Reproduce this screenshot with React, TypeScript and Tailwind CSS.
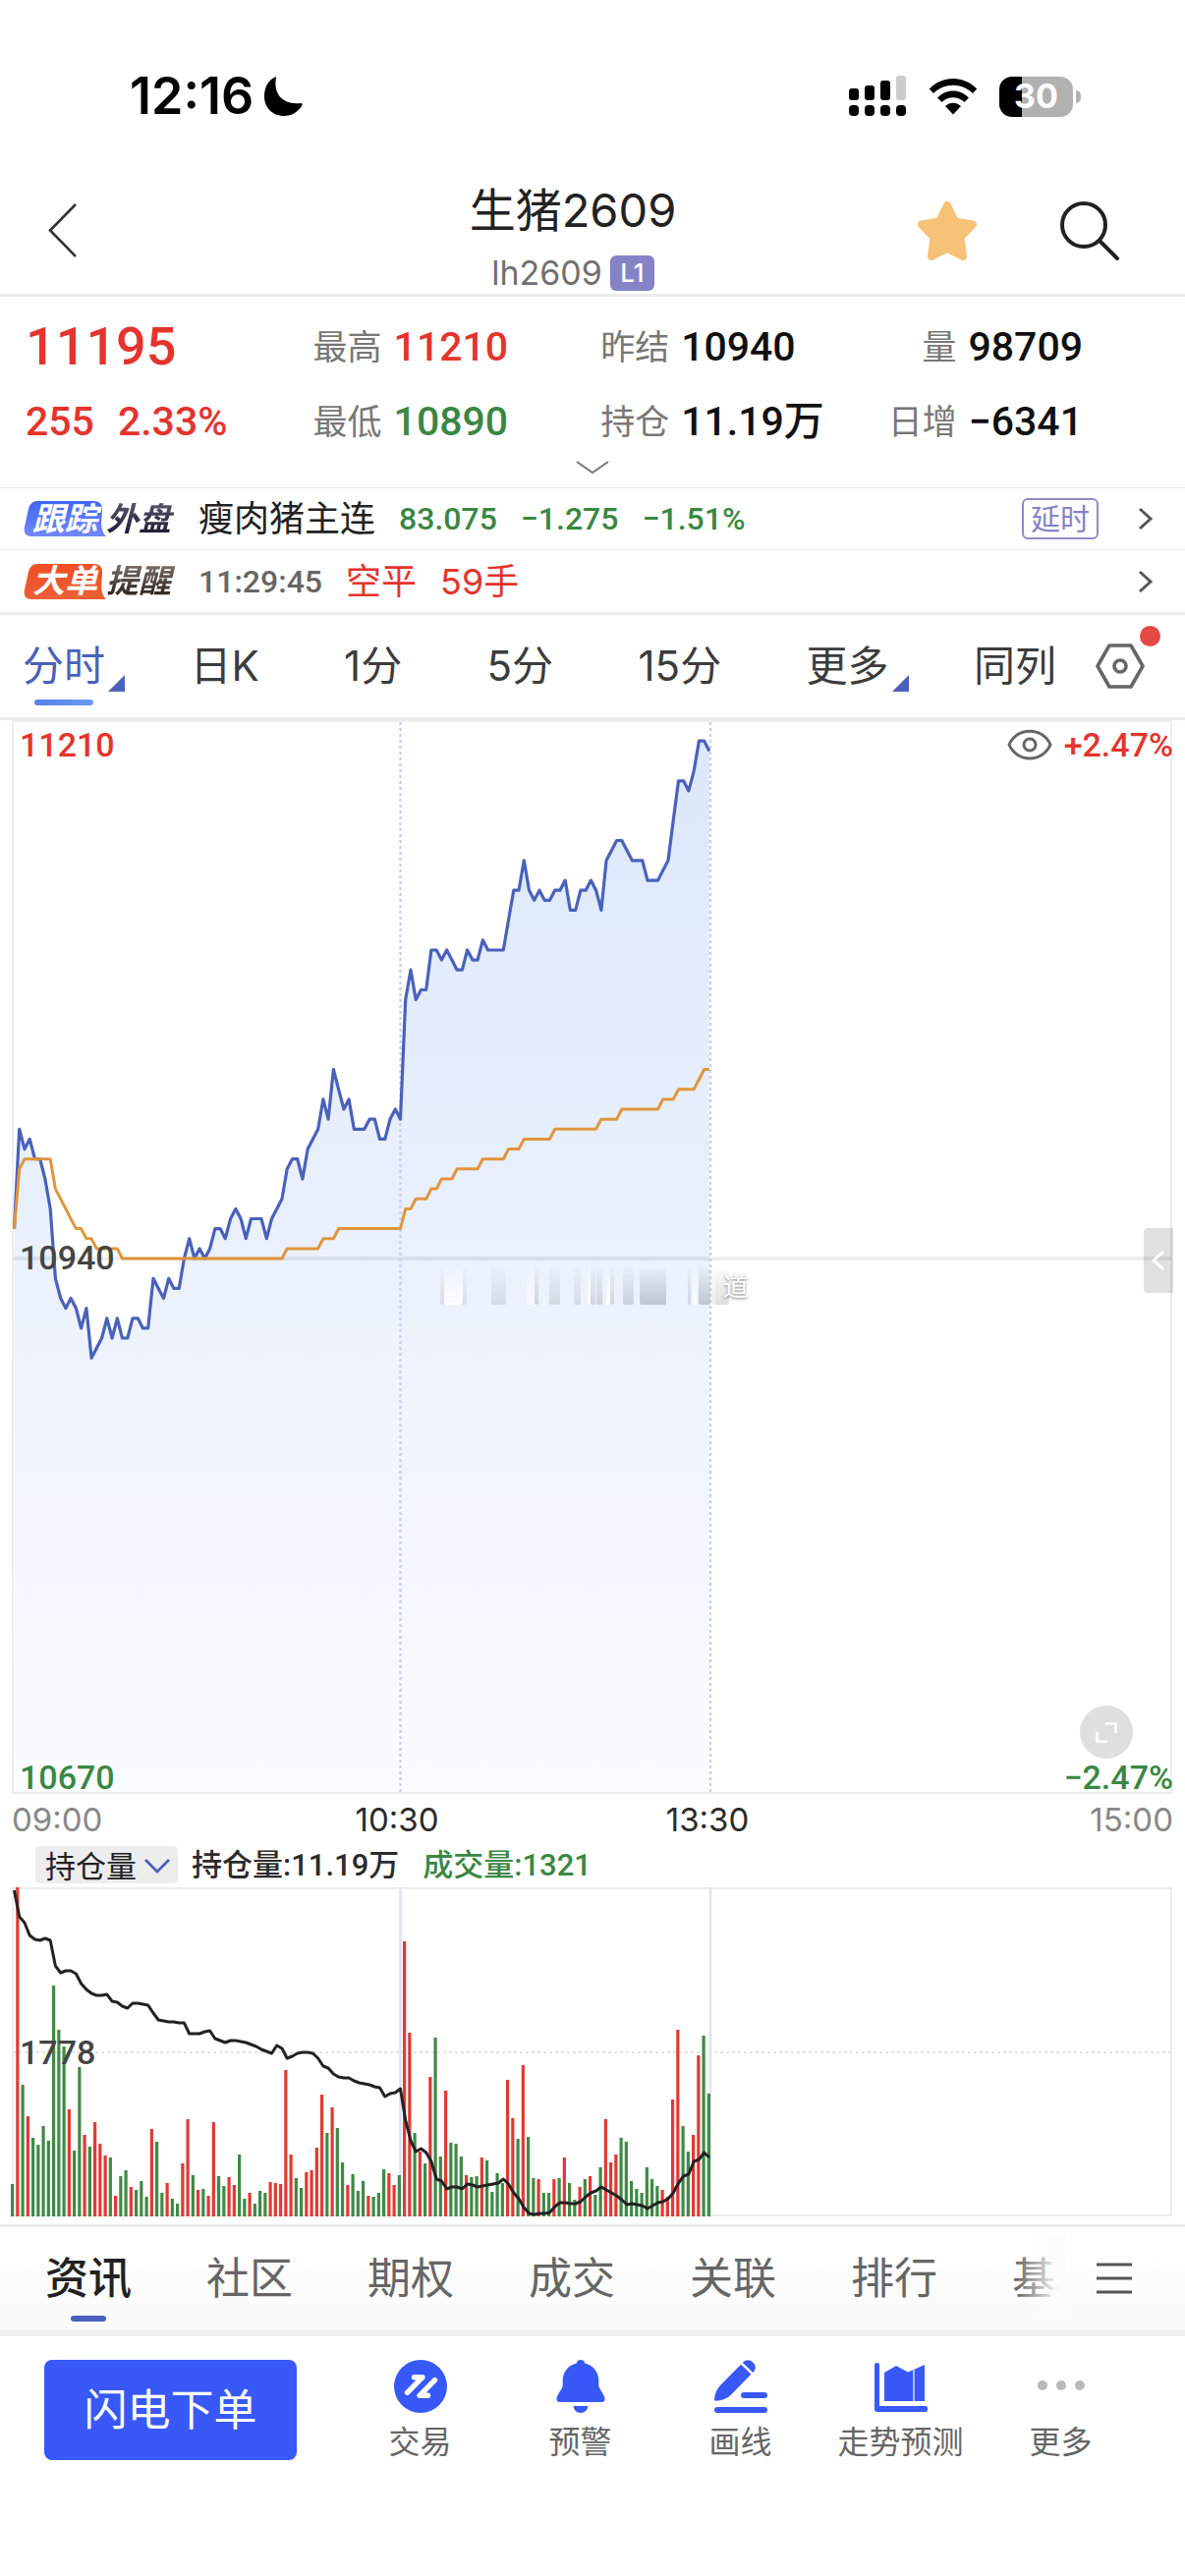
import React from 'react';

const STEP = 5.24;
const START_X = 14.5;
const MID_Y = 548;
const TICK = 10.13;

// minute closes, in 5-yuan ticks away from the previous settlement (10940)
const priceTicks = [
  3, 13, 11, 12, 10, 10, 8, 5, -2, -4, -5, -4, -5, -7, -5, -10, -9, -8, -6, -8, -6, -8, -8, -6, -6, -7, -7, -2, -3, -4,
  -2, -3, -3, 0, 2, 0, 1, 0, 1, 3, 3, 2, 4, 5, 4, 2, 4, 4, 4, 2, 4, 5, 6, 9, 10, 10, 8, 11, 12, 13, 16, 14, 19, 17, 15,
  16, 13, 13, 13, 14, 14, 12, 12, 14, 15, 14, 26, 29, 26, 27, 27, 31, 31, 30, 31, 30, 29, 29, 31, 30, 30, 32, 31, 31,
  31, 31, 34, 37, 37, 40, 37, 36, 37, 36, 36, 37, 37, 38, 35, 35, 37, 37, 38, 37, 35, 40, 41, 42, 42, 41, 40, 40, 40,
  38, 38, 38, 39, 40, 44, 48, 48, 47, 49, 52, 52, 51,
];

// average price as [tick, minutes]
const averageRuns = [
  [3, 1], [9, 1], [10, 6], [7, 1], [6, 1], [5, 1], [4, 1], [3, 2], [2, 2], [1, 5], [0, 32], [1, 7], [2, 3], [3, 13],
  [5, 2], [6, 3], [7, 2], [8, 3], [9, 5], [10, 5], [11, 3], [12, 6], [13, 9], [14, 4], [15, 8], [16, 3], [17, 4],
  [18, 1], [19, 2],
];

// bar heights, positive = red, negative = green
const volumes = [
  -33, 335, -134, 102, -80, -73, -92, -77, -235, -190, -173, 109, -67, -152, 83, -71, 96, 74, 62, -60, 21, -41, -47, 30,
  -27, -36, -20, 89, -76, -24, 34, -18, -13, 54, 99, -42, 27, -28, 21, 96, -41, -31, 40, 32, -63, -18, 24, -13, -26, -24,
  35, 34, 33, 149, 63, -39, -29, 45, 47, 70, 124, -85, 111, -90, -55, 32, -43, -26, -36, 21, -20, -24, -48, 44, 32, -42,
  280, 187, -85, 66, -54, 142, -182, -61, 128, -75, -74, -61, 42, -40, -41, 60, -57, -25, -44, -34, 139, 100, -79, 154,
  -81, -39, 38, -24, -24, 38, -39, 60, -34, -17, 30, -38, 41, -22, -50, 99, 55, 63, -80, -76, -36, -28, -24, -50, -38,
  -31, 27, 20, 119, 190, -92, -66, 83, 164, -184, -125,
];

const openInterest = [
  3, 30, 36, 49, 53, 54, 52, 54, 80, 87, 85, 85, 88, 98, 104, 108, 110, 110, 109, 116, 117, 121, 123, 118, 118, 119, 120,
  128, 135, 136, 137, 137, 138, 138, 149, 149, 149, 147, 146, 154, 156, 158, 156, 156, 157, 158, 160, 162, 165, 167, 169,
  161, 164, 174, 172, 169, 168, 168, 169, 174, 182, 184, 190, 193, 194, 194, 197, 199, 200, 201, 203, 204, 213, 210, 209,
  205, 237, 258, 269, 266, 270, 279, 297, 299, 307, 305, 305, 307, 302, 303, 305, 304, 303, 302, 301, 297, 302, 311, 317,
  326, 332, 333, 332, 332, 331, 325, 321, 321, 322, 322, 320, 315, 311, 309, 305, 308, 311, 314, 318, 323, 322, 323, 324,
  327, 324, 321, 320, 317, 311, 301, 294, 292, 279, 277, 270, 275,
];

const xAt = (i: number) => START_X + i * STEP;
const tickLine = (ticks: number[]) => ticks.map((t, i) => `${xAt(i).toFixed(1)},${(MID_Y - t * TICK).toFixed(1)}`).join(' ');

const priceLine = tickLine(priceTicks);
const averageLine = tickLine(averageRuns.flatMap(([t, n]) => Array<number>(n).fill(t)));
const interestLine = openInterest.map((y, i) => `${xAt(i).toFixed(1)},${y}`).join(' ');
const lastX = xAt(priceTicks.length - 1);

const num = "font-['Roboto','Noto_Sans_CJK_SC',sans-serif] font-medium";

const StatusBar: React.FC = () => (
  <div className="mt-[62px] flex h-[72px] items-center justify-between pr-[106px] pl-[132px]">
    <div className="flex items-center gap-2.5">
      <span className="text-[52px] leading-none font-semibold text-black">12:16</span>
      <svg className="h-10 w-10" viewBox="0 0 40 40">
        <path d="M13 1C10 17 19 29 38 27C40 27 40 28 39 30C35 36 29 40 21 40C9 40 1 31 1 20C1 11 5 4 11 1C12.500 0 13.200 0 13 1Z" fill="#000" />
      </svg>
    </div>
    <div className="flex items-center gap-[22px]">
      <svg className="h-[42px] w-[59px]" viewBox="0 0 59 42">
        <rect x="0" y="13" width="10" height="12" rx="3" />
        <rect x="16" y="10" width="10" height="15" rx="3" />
        <rect x="32" y="5" width="10" height="20" rx="3" />
        <rect x="48" y="0" width="10" height="25" rx="3" fill="#cbcbcb" />
        {[0, 16, 32, 48].map((x) => (
          <rect key={x} x={x} y="30" width="10" height="11" rx="4" />
        ))}
      </svg>
      <svg className="h-[38px] w-[50px]" viewBox="0 0 50 38">
        <path d="M0.800 11.500C14 -2.500 36 -2.500 49.200 11.500L45 16C34 5 16 5 5 16Z" />
        <path d="M9 20.500C18 11 32 11 41 20.500L36.500 25C30.500 18.500 19.500 18.500 13.500 25Z" />
        <path d="M17 29C21.500 24.500 28.500 24.500 33 29L25 37.500Z" />
      </svg>
      <div className="flex items-center gap-[3px]">
        <div className="flex h-[41px] w-[75px] items-center justify-center rounded-[13px] bg-linear-to-r from-black from-31% to-[#b1b1b1] to-31%">
          <span className="text-[34px] leading-none font-bold text-white">30</span>
        </div>
        <div className="h-[13px] w-[5px] rounded-r-full bg-[#b1b1b1]" />
      </div>
    </div>
  </div>
);

const Header: React.FC = () => (
  <header className="flex items-start border-b-[3px] border-[#ececec] pt-[52px] pb-px">
    <div className="w-[232px] pt-5 pl-[48px]">
      <button aria-label="返回" className="block">
        <svg className="h-[58px] w-8" viewBox="0 0 32 58" fill="none" stroke="#333" strokeWidth="2.600">
          <path d="M29 2L3 28.500L29 55" />
        </svg>
      </button>
    </div>
    <div className="flex flex-1 flex-col items-center">
      <h1 className="text-[47px] leading-[56px] text-[#222]">生猪2609</h1>
      <div className="mt-4 flex h-10 items-center gap-2">
        <span className="text-[34px] leading-none text-[#707070]">lh2609</span>
        <span className="flex h-9 w-[45px] items-center justify-center rounded-md bg-[#8583c6] text-[26px] leading-none font-medium text-white">L1</span>
      </div>
    </div>
    <div className="flex w-[272px] justify-between pt-[18px] pr-[66px]">
      <button aria-label="自选">
        <svg className="size-[60px]" viewBox="0 0 60 60">
          <path
            d="M30 4L38 20.500L56 23.500L43.500 36.500L46 56L30 48L14 56L16.500 36.500L4 23.500L22 20.500Z"
            fill="#f6c278"
            stroke="#f6c278"
            strokeWidth="8"
            strokeLinejoin="round"
          />
        </svg>
      </button>
      <button aria-label="搜索">
        <svg className="size-[62px]" viewBox="0 0 62 62" fill="none" stroke="#222" strokeWidth="4">
          <circle cx="25" cy="25" r="22" />
          <path d="M41 41L59 59" strokeLinecap="round" />
        </svg>
      </button>
    </div>
  </header>
);

const Stat: React.FC<{ label: string; value: string; color?: string; end?: boolean }> = ({ label, value, color = 'text-[#111]', end }) => (
  <div className={`flex h-[76px] items-center gap-3 whitespace-nowrap ${end ? 'justify-end' : ''}`}>
    <span className="text-[35px] leading-none text-[#777]">{label}</span>
    <span className={`text-[41px] leading-none ${num} ${color}`}>{value}</span>
  </div>
);

const Quote: React.FC = () => (
  <section className="border-b border-[#e8ebe8] pt-[13px]">
    <div className="grid grid-cols-[3fr_3fr_3fr_2fr] pr-[104px] pl-[26px]">
      <div className={`flex h-[76px] items-center text-[54px] leading-none text-[#e4342d] ${num}`}>11195</div>
      <Stat label="最高" value="11210" color="text-[#e4342d]" />
      <Stat label="昨结" value="10940" />
      <Stat label="量" value="98709" end />
      <div className={`flex h-[76px] items-center gap-6 text-[41px] leading-none text-[#e4342d] ${num}`}>
        <span>255</span>
        <span>2.33%</span>
      </div>
      <Stat label="最低" value="10890" color="text-[#3a8743]" />
      <Stat label="持仓" value="11.19万" />
      <Stat label="日增" value="−6341" end />
    </div>
    <button aria-label="展开" className="flex h-[29px] w-full justify-center pt-0.5">
      <svg className="h-3.5 w-9" viewBox="0 0 36 14" fill="none" stroke="#777" strokeWidth="2">
        <path d="M2 1L18 12L34 1" />
      </svg>
    </button>
  </section>
);

const ChevronRight: React.FC = () => (
  <svg className="h-6 w-4" viewBox="0 0 16 24" fill="none" stroke="#555" strokeWidth="3">
    <path d="M2 2L13 12L2 22" />
  </svg>
);

const Badge: React.FC<{ first: string; second: string; from: string; to: string; tone: string }> = ({ first, second, from, to, tone }) => (
  <span className="flex w-[178px] items-center text-[33px] leading-none font-bold italic">
    <span className="relative flex h-9 w-[84px] items-center justify-center">
      <svg className="absolute inset-0 h-full w-full" viewBox="0 0 84 36" preserveAspectRatio="none">
        <defs>
          <linearGradient id={`badge-${from}`} x2="0" y2="1">
            <stop stopColor={`#${from}`} />
            <stop offset="1" stopColor={`#${to}`} />
          </linearGradient>
        </defs>
        <path d="M14 0H71Q81 0 80 10L79 24Q80 32 84 36H8Q-1 36 1 26L5 8Q7 0 14 0Z" fill={`url(#badge-${from})`} />
      </svg>
      <span className="relative text-white">{first}</span>
    </span>
    <span className={`bg-linear-to-b bg-clip-text pr-1 text-transparent ${tone}`}>{second}</span>
  </span>
);

const Linked: React.FC = () => (
  <section>
    <button className="flex h-[63px] w-full items-center gap-6 border-b border-[#e8ebe8] pr-8 pl-6 whitespace-nowrap">
      <span className="-mr-6">
        <Badge first="跟踪" second="外盘" from="4166f5" to="7387fb" tone="from-[#56566a] to-[#1c1830]" />
      </span>
      <span className="text-[36px] leading-none text-[#222]">瘦肉猪主连</span>
      <span className={`text-[32px] leading-none text-[#3a8743] ${num}`}>83.075</span>
      <span className={`text-[32px] leading-none text-[#3a8743] ${num}`}>−1.275</span>
      <span className={`text-[32px] leading-none text-[#3a8743] ${num}`}>−1.51%</span>
      <span className="mr-4 ml-auto flex h-[42px] w-[78px] items-center justify-center rounded-md border-2 border-[#8f8cca] text-[30px] leading-none text-[#8583c6]">
        延时
      </span>
      <ChevronRight />
    </button>
    <button className="flex h-[63px] w-full items-center gap-6 pr-8 pl-6 whitespace-nowrap">
      <span className="-mr-6">
        <Badge first="大单" second="提醒" from="ee4f24" to="ec6038" tone="from-[#7a6f69] to-[#2b211c]" />
      </span>
      <span className={`text-[32px] leading-none text-[#666] ${num}`}>11:29:45</span>
      <span className="text-[36px] leading-none text-[#e4342d]">空平</span>
      <span className="flex-1 text-left text-[36px] leading-none text-[#e4342d]">59手</span>
      <ChevronRight />
    </button>
  </section>
);

const periods = [
  { label: '分时', menu: true, active: true },
  { label: '日K' },
  { label: '1分' },
  { label: '5分' },
  { label: '15分' },
  { label: '更多', menu: true },
  { label: '同列' },
];

const PeriodTabs: React.FC = () => (
  <nav className="flex h-[110px] items-center border-y-[3px] border-[#ececec] pr-[41px] pl-[23px]">
    <div className="mr-10 flex flex-1 justify-between">
      {periods.map((p) => (
        <button key={p.label} className={`relative text-[42px] leading-[60px] ${p.active ? 'text-[#4a61bb]' : 'text-[#3c3c3c]'}`}>
          {p.label}
          {p.menu && (
            <svg className="absolute -right-5 bottom-1 size-[17px]" viewBox="0 0 17 17">
              <path d="M17 0V17H0Z" fill="#4a61bb" />
            </svg>
          )}
          {p.active && <span className="absolute -bottom-2.5 left-3 h-1.5 w-15 rounded-sm bg-linear-to-r from-[#5b7cf0] to-[#6b9bf3]" />}
        </button>
      ))}
    </div>
    <button aria-label="设置" className="relative">
      <svg className="h-[46px] w-[50px]" viewBox="0 0 50 46" fill="none" stroke="#666" strokeWidth="3.600">
        <path d="M14 2H36L48 23L36 44H14L2 23Z" strokeLinejoin="round" />
        <circle cx="25" cy="23" r="6" />
      </svg>
      <span className="absolute -top-[18px] -right-4 size-[21px] rounded-full bg-[#e34a43]" />
    </button>
  </nav>
);

// smeared leftovers of the watermark, [x, width, colour, opacity]
const smears: [number, number, string, number][] = [
  [448, 27, '#b8bcc6', 0.35],
  [452, 19, '#ffffff', 0.95],
  [500, 15, '#c3cad8', 0.6],
  [536, 8, '#fafafa', 0.9],
  [544, 4, '#b9bec9', 0.6],
  [559, 11, '#c9ced9', 0.7],
  [584, 7, '#ccd2de', 0.7],
  [598, 3, '#ffffff', 0.9],
  [601, 5, '#c4cad6', 0.7],
  [607, 6, '#bfc5d1', 0.7],
  [617, 4, '#ffffff', 0.9],
  [621, 4, '#c4cad6', 0.7],
  [634, 11, '#bcc3d0', 0.7],
  [651, 27, '#b3b9c5', 0.8],
  [700, 3, '#c2c8d4', 0.7],
  [705, 4, '#ffffff', 0.8],
  [711, 12, '#b5bac6', 0.8],
  [724, 4, '#e8e8e8', 0.8],
  [728, 14, '#c9c9c9', 0.6],
];

const PriceChart: React.FC = () => (
  <section className="relative">
    <svg className="block h-auto w-full" viewBox="0 0 1206 1093" fill="none">
      <defs>
        <linearGradient id="area" x1="0" y1="20" x2="0" y2="1093" gradientUnits="userSpaceOnUse">
          <stop stopColor="#dbe8fb" />
          <stop offset="0.500" stopColor="#ebf1fd" />
          <stop offset="1" stopColor="#fbfcff" />
        </linearGradient>
        <linearGradient id="smear" x2="0" y2="1">
          <stop stopColor="#fff" stopOpacity="0.050" />
          <stop offset="1" stopColor="#fff" />
        </linearGradient>
        <mask id="smear-fade">
          <rect x="440" y="556" width="310" height="39" fill="url(#smear)" />
        </mask>
      </defs>
      <polygon points={`${START_X},1092 ${priceLine} ${lastX},1092`} fill="url(#area)" />
      <path d="M13 1H1192V1092H13Z" stroke="#ededee" strokeWidth="2" />
      <path d="M13 548H1192" stroke="#000" strokeOpacity="0.070" strokeWidth="4" />
      <path d="M407.500 2V1092M723 2V1092" stroke="#c9d0f0" strokeWidth="2.400" strokeDasharray="3 3" />
      <polyline points={priceLine} stroke="#4a61bb" strokeWidth="3.200" strokeLinejoin="round" />
      <polyline points={averageLine} stroke="#e0953b" strokeWidth="3" strokeLinejoin="round" />
      <g mask="url(#smear-fade)">
        {smears.map(([x, w, color, opacity]) => (
          <rect key={x} x={x} y="558" width={w} height="37" rx="2" fill={color} opacity={opacity} />
        ))}
      </g>
    </svg>
    <span className={`absolute top-2 left-5 text-[34px] leading-[34px] text-[#e4342d] ${num}`}>11210</span>
    <div className="absolute top-2 right-3 flex items-center gap-3">
      <svg className="h-8 w-[46px]" viewBox="0 0 46 32" fill="none" stroke="#666" strokeWidth="3">
        <path d="M2 16C10 -2.500 36 -2.500 44 16C36 34.500 10 34.500 2 16Z" />
        <circle cx="23" cy="16" r="6" />
      </svg>
      <span className={`text-[34px] leading-[34px] text-[#e4342d] ${num}`}>+2.47%</span>
    </div>
    <span className={`absolute top-1/2 left-5 -translate-y-1/2 text-[34px] leading-[34px] text-[#444] ${num}`}>10940</span>
    <span className={`absolute bottom-0 left-5 text-[34px] leading-[34px] text-[#3a8743] ${num}`}>10670</span>
    <span className={`absolute right-3 bottom-0 text-[34px] leading-[34px] text-[#3a8743] ${num}`}>−2.47%</span>
    <span className="absolute top-[51%] left-[61%] text-[26px] leading-[40px] text-white [text-shadow:0_1px_3px_#777]">道</span>
    <button aria-label="展开盘口" className="absolute top-[517px] right-3 flex h-[66px] w-[30px] items-center justify-center rounded-l-sm bg-black/12">
      <svg className="h-[22px] w-3.5" viewBox="0 0 14 22" fill="none" stroke="#fff" strokeWidth="3">
        <path d="M12 2L2 11L12 20" />
      </svg>
    </button>
    <button aria-label="全屏" className="absolute right-[53px] bottom-9 flex size-[54px] items-center justify-center rounded-full bg-[#dfdfdf]">
      <svg className="h-[21px] w-[22px]" viewBox="0 0 22 21" fill="none" stroke="#fff" strokeWidth="2.600">
        <path d="M10 1.500H20.500V11M1.500 10V19.500H12" />
      </svg>
    </button>
  </section>
);

const TimeAxis: React.FC = () => (
  <div className="relative flex h-[53px] items-center justify-between px-3 text-[33px] leading-none text-[#888]">
    <span>09:00</span>
    <span className="absolute left-[33.500%] -translate-x-1/2 text-[#2b2b2b]">10:30</span>
    <span className="absolute left-[59.700%] -translate-x-1/2 text-[#2b2b2b]">13:30</span>
    <span>15:00</span>
  </div>
);

const VolumeChart: React.FC = () => (
  <section className="border-b-[3px] border-[#ececec] pb-[7px]">
    <div className={`flex h-[42px] items-center pb-1 pl-9 text-[31px] leading-none ${num}`}>
      <div className="relative mr-3.5">
        <select
          aria-label="指标"
          defaultValue="持仓量"
          className="block h-[38px] w-[145px] appearance-none rounded-sm bg-[#ededee] pl-2.5 font-['Noto_Sans_CJK_SC',sans-serif] text-[31px] leading-[38px] font-normal text-[#222]"
        >
          <option>持仓量</option>
        </select>
        <svg className="pointer-events-none absolute top-3 right-2 h-4 w-[26px]" viewBox="0 0 26 16" fill="none" stroke="#4a61bb" strokeWidth="2.800">
          <path d="M1 2L13 14L25 2" />
        </svg>
      </div>
      <span className="mr-6 text-[#2b2b2b]">持仓量:11.19万</span>
      <span className="text-[#3a8743]">成交量:1321</span>
    </div>
    <div className="relative">
      <svg className="block h-auto w-full" viewBox="0 0 1206 336" fill="none">
        <path d="M13 1H1192V334H13Z" stroke="#ededee" strokeWidth="2" />
        <path d="M13 168H1192" stroke="#e3e3e6" strokeWidth="2" strokeDasharray="3 3" />
        <path d="M407.500 0V335M723 0V335" stroke="#dde3f4" strokeWidth="2.600" />
        {volumes.map((v, i) => (
          <rect
            key={i}
            x={11 + i * 5.25}
            y={335 - Math.abs(v)}
            width="3.200"
            height={Math.abs(v)}
            fill={v > 0 ? '#e03a34' : '#3f8a45'}
          />
        ))}
        <polyline points={interestLine} stroke="#222" strokeWidth="3" strokeLinejoin="round" />
      </svg>
      <span className={`absolute top-1/2 left-5 -translate-y-1/2 text-[34px] leading-none text-[#444] ${num}`}>1778</span>
    </div>
  </section>
);

const sections = ['资讯', '社区', '期权', '成交', '关联', '排行', '基本'];

const SectionTabs: React.FC = () => (
  <nav className="flex h-[111px] items-center border-b-[7px] border-[#f0f0f0] bg-linear-to-b from-white to-[#fafafa] pr-[53px] pl-[46px]">
    <div className="relative mr-[31px] flex w-0 flex-1 gap-[76px] overflow-hidden whitespace-nowrap">
      {sections.map((s, i) => (
        <button key={s} className={`relative shrink-0 text-[44px] leading-[88px] ${i === 0 ? 'font-medium text-[#222]' : 'text-[#666]'}`}>
          {s}
          {i === 0 && <span className="absolute bottom-0 left-1/2 h-1.5 w-9 -translate-x-1/2 rounded-sm bg-[#4a61bb]" />}
        </button>
      ))}
      <span className="absolute inset-y-0 right-0 w-[50px] bg-linear-to-r from-white/0 to-[#fcfcfc] to-90%" />
    </div>
    <button aria-label="栏目">
      <svg className="h-8 w-[38px]" viewBox="0 0 38 32" stroke="#555" strokeWidth="3">
        <path d="M1 2H37M1 16H37M1 30H37" />
      </svg>
    </button>
  </nav>
);

const actions = [
  {
    label: '交易',
    icon: (
      <>
        <circle cx="27" cy="27" r="27" fill="#3858f7" />
        <path
          d="M20.500 17.700H29L13.500 33.300M41.500 20.700L26 36.300H34.500"
          fill="none"
          stroke="#fff"
          strokeWidth="5.400"
          strokeLinecap="round"
          strokeLinejoin="round"
        />
      </>
    ),
  },
  {
    label: '预警',
    icon: (
      <path
        d="M27 0C29.500 0 31.200 1.600 31.300 3.600C39.500 5.500 45.300 12.500 45.300 21V26C45.300 29 51.500 36 51.500 39.500C51.500 42 50.500 43 48 43H6C3.500 43 2.500 42 2.500 39.500C2.500 36 8.700 29 8.700 26V21C8.700 12.500 14.500 5.500 22.700 3.600C22.800 1.600 24.500 0 27 0ZM19.700 47H34.300C34.300 51 31 54 27 54C23 54 19.700 51 19.700 47Z"
        fill="#3858f7"
      />
    ),
  },
  {
    label: '画线',
    icon: (
      <g fill="#3858f7">
        <path d="M27 4.700L37.500 14.500L17 35.500Q11 41.500 1.500 41.700Q-0.300 41.700 0 40Q0.800 31 6.500 25.500Z" />
        <path d="M28.700 2.700Q32.500 -1.500 37.500 1.200Q43.500 5 41 10.500Q40.300 12 39.300 13Z" />
        <rect x="27" y="33" width="27" height="6" rx="3" />
        <rect y="48" width="54" height="6" rx="3" />
      </g>
    ),
  },
  {
    label: '走势预测',
    icon: (
      <g fill="#3858f7">
        <path d="M0 5Q0 3 2 3H3Q5 3 5 5V47H52Q54 47 54 49V51Q54 53 52 53H3Q0 53 0 50Z" />
        <path d="M10 13L22 6L34 12.500L51 5V42H10Z" />
        <path d="M40 10V42" stroke="#fff" strokeWidth="1.200" />
      </g>
    ),
  },
  {
    label: '更多',
    icon: (
      <g fill="#b9b9b9">
        <circle cx="8" cy="26" r="5" />
        <circle cx="27" cy="26" r="5" />
        <circle cx="46" cy="26" r="5" />
      </g>
    ),
  },
];

const ActionBar: React.FC = () => (
  <footer className="flex h-[240px] items-start bg-white px-[45px] pt-6">
    <button className="h-[102px] w-[257px] rounded-lg bg-[#3858f7] text-[44px] leading-none text-white">闪电下单</button>
    <div className="ml-[44px] grid flex-1 grid-cols-5">
      {actions.map((a) => (
        <button key={a.label} className="flex flex-col items-center gap-3.5 whitespace-nowrap">
          <svg className="size-[54px]" viewBox="0 0 54 54">
            {a.icon}
          </svg>
          <span className="text-[32px] leading-8 text-[#666]">{a.label}</span>
        </button>
      ))}
    </div>
  </footer>
);

export default function App() {
  return (
    <main className="flow-root min-h-screen bg-white font-['Inter','Noto_Sans_CJK_SC',sans-serif]">
      <StatusBar />
      <Header />
      <Quote />
      <Linked />
      <PeriodTabs />
      <PriceChart />
      <TimeAxis />
      <VolumeChart />
      <SectionTabs />
      <ActionBar />
    </main>
  );
}
